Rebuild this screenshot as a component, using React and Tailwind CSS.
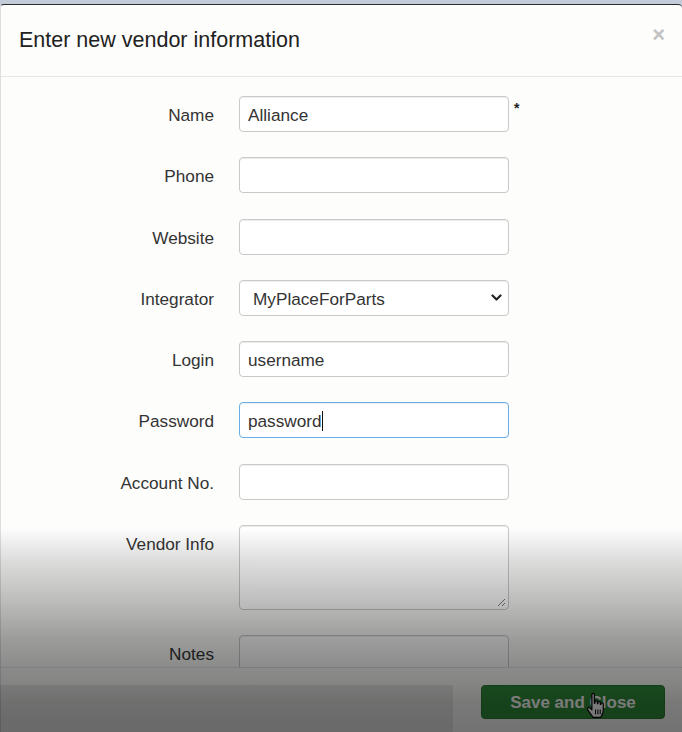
import React from "react";

function Field({ label, children, star }) {
  return (
    <div className="flex items-start">
      <div className="w-[213px] h-[36px] leading-[38px] text-right text-[17.2px] text-[#333]">{label}</div>
      <div className="ml-[25px] relative">{children}</div>
      {star && <div className="ml-[5px] mt-[5px] text-[14px] font-bold text-[#222] leading-none">*</div>}
    </div>
  );
}

const boxBase =
  "w-[270px] h-[36px] rounded-[4px] border bg-white text-[17.2px] text-[#333] leading-[36px] shadow-[inset_0_1px_1px_rgba(0,0,0,0.075)]";

function Box({ children, focus, className = "" }) {
  return (
    <div
      className={
        boxBase +
        " " +
        (focus
          ? "border-[#66afe9] shadow-[inset_0_1px_1px_rgba(0,0,0,0.075),0_0_8px_rgba(102,175,233,0.75)]"
          : "border-[#c9c9c9]") +
        " pl-[8px] " +
        className
      }
    >
      {children}
    </div>
  );
}

export default function App() {
  return (
    <div className="relative w-[682px] h-[732px] overflow-hidden bg-[#c4cbd9] pt-[4px] font-['Liberation_Sans',Arial,sans-serif]">
      <div className="h-[728px] flex flex-col bg-[#fdfdfc] border-t border-t-[#2b2b2b] border-l border-l-[#dedede] rounded-tl-[4px] rounded-tr-[4px]">
        {/* header */}
        <div className="h-[72px] shrink-0 border-b border-[#e6e6e6] flex items-center justify-between pl-[18px] pr-[17px]">
          <h4 className="text-[21.5px] text-[#222] leading-none">Enter new vendor information</h4>
          <span className="text-[22px] font-bold text-[#c2c2c2] leading-none -mt-[12px]">×</span>
        </div>
        {/* body */}
        <div className="flex-1 overflow-hidden pt-[19px]">
          <div className="flex flex-col gap-y-[25.3px]">
            <Field label="Name" star>
              <Box>Alliance</Box>
            </Field>
            <Field label="Phone">
              <Box />
            </Field>
            <Field label="Website">
              <Box />
            </Field>
            <Field label="Integrator">
              <Box className="!pl-[13px] relative">
                MyPlaceForParts
                <svg className="absolute right-[6px] top-[13px]" width="11" height="8" viewBox="0 0 11 8">
                  <path d="M1.5 1.5 L5.5 5.5 L9.5 1.5" fill="none" stroke="#222" strokeWidth="2.2" strokeLinecap="round" strokeLinejoin="round" />
                </svg>
              </Box>
            </Field>
            <Field label="Login">
              <Box>username</Box>
            </Field>
            <Field label="Password">
              <Box focus>
                <span>password</span>
                <span className="inline-block w-[1px] h-[20px] bg-[#111] align-middle -mt-[3px]" />
              </Box>
            </Field>
            <Field label="Account No.">
              <Box />
            </Field>
            <Field label="Vendor Info">
              <div className="w-[270px] h-[85px] rounded-[4px] border border-[#c9c9c9] bg-white shadow-[inset_0_1px_1px_rgba(0,0,0,0.075)] relative">
                <svg className="absolute right-[2px] bottom-[2px]" width="10" height="10" viewBox="0 0 10 10">
                  <path d="M2 9 L9 2 M6 9 L9 6" stroke="#777" strokeWidth="1" fill="none" />
                </svg>
              </div>
            </Field>
            <Field label="Notes">
              <Box />
            </Field>
          </div>
        </div>
        {/* footer */}
        <div className="h-[65px] shrink-0 border-t border-[#e6e6e6] flex justify-end pt-[17px] pr-[17px]">
          <button className="w-[184px] h-[34px] rounded-[4px] bg-[#2f8c39] border border-[#2a7a33] text-white font-bold text-[17px] leading-none">
            Save and Close
          </button>
        </div>
      </div>

      {/* hand cursor */}
      <svg className="absolute left-[585px] top-[692px]" width="22" height="27" viewBox="0 0 18 23">
        <path
          d="M5.5 2.2 C5.5 0.9 7.6 0.9 7.6 2.2 L7.6 9.5 L8.1 9.5 L8.1 8.2 C8.1 7.1 10.2 7.1 10.2 8.2 L10.2 10 L10.6 10 L10.6 9 C10.6 7.9 12.7 7.9 12.7 9 L12.7 10.6 L13.1 10.6 L13.1 10.1 C13.1 9 15.2 9 15.2 10.1 L15.2 15.5 C15.2 18.3 14 20 13 21.6 L6.6 21.6 C5.5 20 3.6 17.8 2 15.2 C1.3 14 2.6 12.6 3.7 13.5 L5.5 15.2 Z"
          fill="#fff"
          stroke="#000"
          strokeWidth="1"
          strokeLinejoin="round"
        />
        <path d="M8.6 15 V19 M10.6 15 V19 M12.6 15 V19" stroke="#000" strokeWidth="0.9" />
      </svg>

      {/* video fade overlay */}
      <div className="absolute left-0 right-0 top-[528px] h-[204px] pointer-events-none bg-[linear-gradient(to_bottom,rgba(0,0,0,0)_0%,rgba(0,0,0,0.13)_16%,rgba(0,0,0,0.25)_35%,rgba(0,0,0,0.39)_55%,rgba(0,0,0,0.45)_68%,rgba(0,0,0,0.48)_77%,rgba(0,0,0,0.52)_85%,rgba(0,0,0,0.55)_100%)]" />
      <div className="absolute left-0 top-[685px] w-[453px] h-[47px] bg-black/[0.08] pointer-events-none" />
    </div>
  );
}
